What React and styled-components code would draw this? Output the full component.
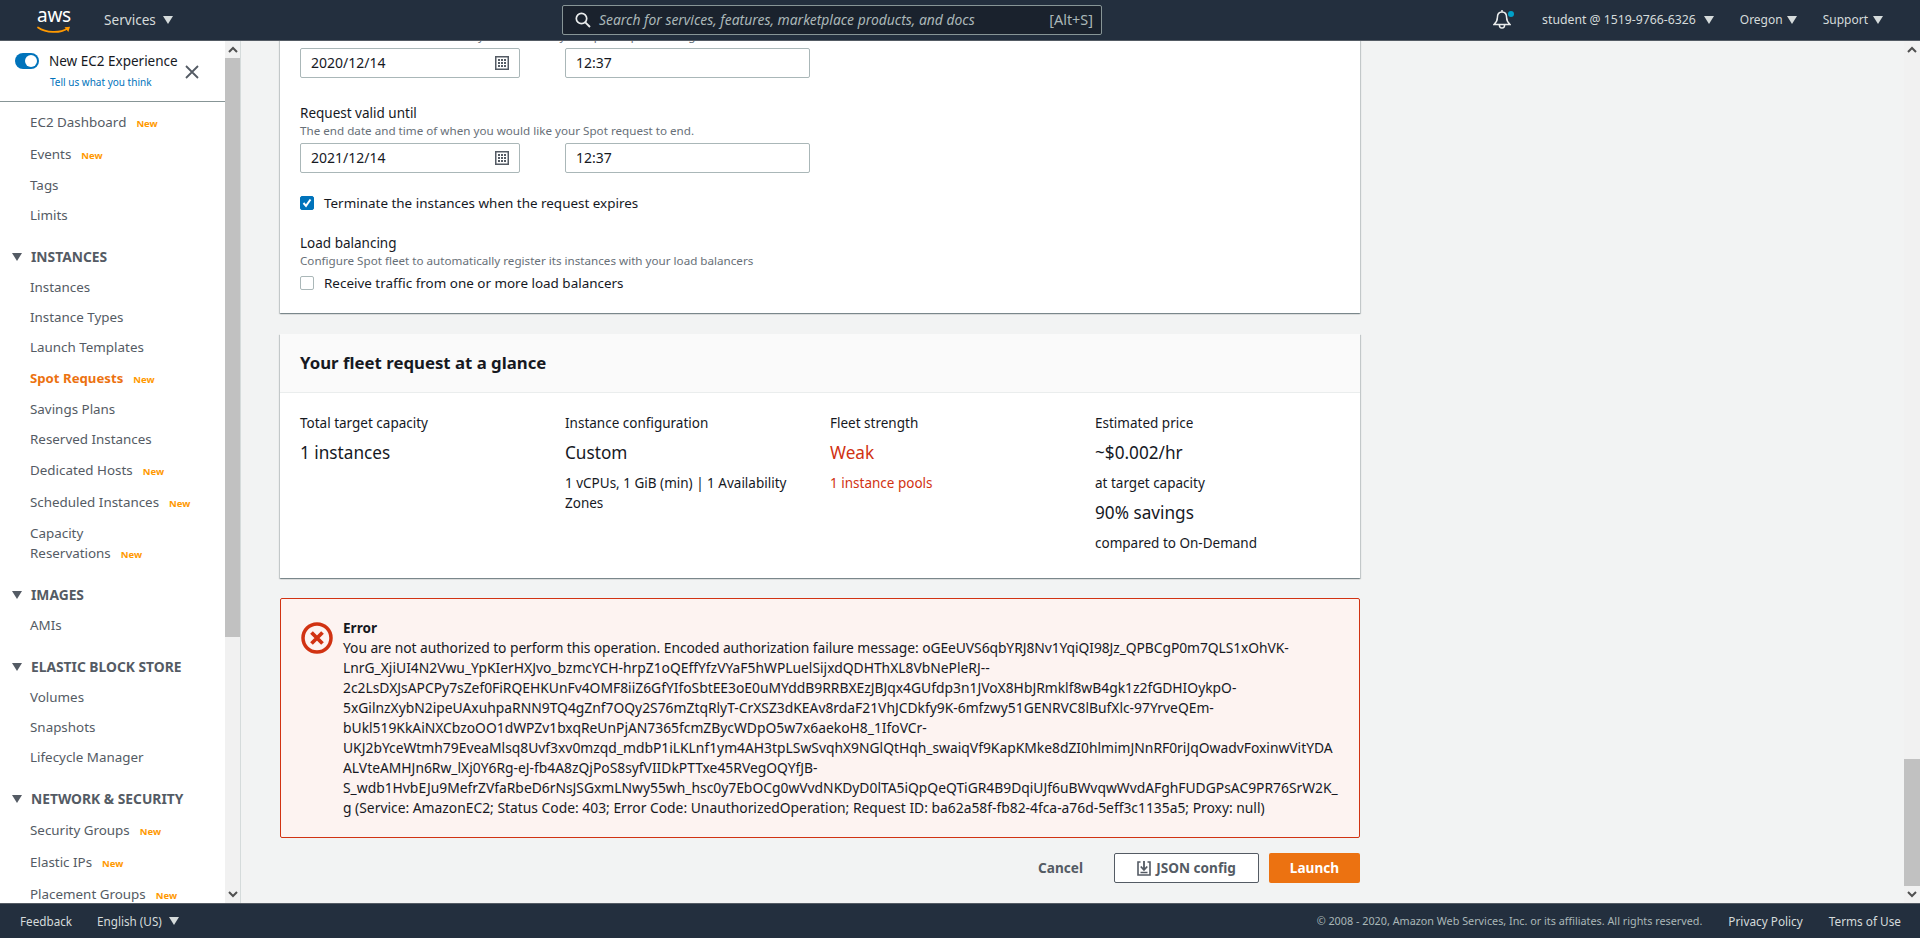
import React from "react";
import styled, { createGlobalStyle } from "styled-components";

const Global = createGlobalStyle`
  html, body { margin: 0; padding: 0; height: 100%; overflow: hidden; }
  body { font-family: "Noto Sans", "Liberation Sans", sans-serif; font-size: 14px; line-height: 20px; color: #16191f; }
  * { box-sizing: border-box; }
`;

const Page = styled.div`display: flex; flex-direction: column; height: 100vh; overflow: hidden;`;

const TopBar = styled.header`
  flex: none; height: 41px; background: #232f3e; border-bottom: 1px solid #545b64;
  display: flex; align-items: center; color: #d5dbdb; padding-right: 37px;
`;
const Logo = styled.div`position: relative; width: 34px; height: 30px; margin-left: 37px; flex: none;`;
const LogoWord = styled.span`
  display: block; font-size: 19px; line-height: 20px; color: #fff; letter-spacing: -.3px; text-align: center; margin-top: 0;
`;
const LogoSmile = styled.svg`position: absolute; left: 0; top: 21px;`;
const ServicesBtn = styled.div`margin-left: 33px; display: flex; align-items: center; gap: 7px; font-size: 13.6px; width: 70px; flex: none;`;
const Caret = styled.svg`flex: none; display: block;`;
const SearchBox = styled.div`
  margin-left: 388px; width: 540px; height: 30px; flex: none; display: flex; align-items: center;
  background: #1a222d; border: 1px solid #879596; border-radius: 2px; padding: 0 8px 0 12px; color: #aab7b8;
`;
const SearchText = styled.span`flex: 1; margin-left: 8px; font-style: italic; font-size: 13.9px;`;
const SearchKey = styled.span`font-size: 14.4px;`;
const NavRight = styled.div`margin-left: auto; display: flex; align-items: center; font-size: 12px;`;
const BellWrap = styled.div`position: relative; width: 18px; height: 22px; margin-right: 30px;`;
const BellDot = styled.span`position: absolute; left: 15px; top: 2px; width: 6px; height: 6px; border-radius: 50%; background: #00a1c9;`;
const NavItem = styled.div`display: flex; align-items: center; gap: ${p => p.$inner || 4}px; margin-left: ${p => p.$gap || 26}px; white-space: nowrap;`;
const AccountText = styled.span`font-size: 12.25px;`;

const Body = styled.div`flex: 1; min-height: 0; display: flex;`;

const Sidebar = styled.aside`flex: none; width: 241px; display: flex; background: #fff; border-right: 1px solid #d5dbdb;`;
const SideInner = styled.div`flex: 1; min-width: 0; overflow: hidden;`;
const Experience = styled.div`
  height: 61px; border-bottom: 1px solid #879596; display: flex; align-items: flex-start; padding: 12px 0 0 15px;
`;
const Toggle = styled.span`
  flex: none; width: 24px; height: 16px; border-radius: 8px; background: #0073bb; position: relative; margin-top: 0;
  &::after { content: ""; position: absolute; right: 2px; top: 2px; width: 12px; height: 12px; border-radius: 50%; background: #fff; }
`;
const ExpText = styled.div`margin-left: 10px; width: 133px;`;
const ExpTitle = styled.div`font-size: 13.5px; line-height: 16px; white-space: nowrap;`;
const ExpLink = styled.div`font-size: 10px; line-height: 14px; margin-top: 6px; margin-left: 1px; color: #0073bb; white-space: nowrap;`;
const CloseIcon = styled.svg`flex: none; margin: 11px 0 0 2px;`;
const Nav = styled.nav`padding-top: 4px;`;
const Item = styled.div`
  display: block; padding: ${p => (p.$badge ? 6 : 5)}px 10px ${p => (p.$badge ? 6 : 5)}px 30px;
  font-size: ${p => (p.$active ? 13.2 : 13.4)}px; color: ${p => (p.$active ? "#ec7211" : "#545b64")}; font-weight: ${p => (p.$active ? 700 : 400)};
`;
const NewBadge = styled.span`margin-left: 10px; font-size: 9.5px; line-height: 0; font-weight: 700; color: #ff9900;`;
const SectionHead = styled.div`
  display: flex; align-items: center; height: 31px; margin-top: 11px; padding-left: 12px;
  font-size: 13.8px; font-weight: 700; color: #545b64;
  svg { margin-right: 9px; }
`;

const ScrollBar = styled.div`flex: none; width: ${p => p.$w}px; background: #f1f1f1; display: flex; flex-direction: column;`;
const ScrollArrow = styled.div`flex: none; height: 17px; display: flex; align-items: center; justify-content: center;`;
const ScrollTrack = styled.div`flex: 1; min-height: 0; display: flex; flex-direction: column; justify-content: ${p => (p.$end ? "flex-end" : "flex-start")};`;
const ScrollThumb = styled.div`background: #c1c1c1; flex: none;`;

const Main = styled.main`flex: 1; min-width: 0; display: flex; background: #f2f3f3;`;
const Scroller = styled.div`
  flex: 1; min-width: 0; overflow: hidden; display: flex; flex-direction: column; justify-content: flex-end;
  padding: 0 0 20px 39px;
`;
const Card = styled.section`
  flex: none; width: 1080px; background: #fff;
  box-shadow: 0 1px 1px 0 rgba(0,28,36,.3), 1px 1px 1px 0 rgba(0,28,36,.15), -1px 1px 1px 0 rgba(0,28,36,.15);
`;
const FormCard = styled(Card)`padding: 0 20px 20px;`;
const FieldLabel = styled.div`font-size: 13.5px; line-height: 20px; margin-top: ${p => p.$mt || 0}px;`;
const Hint = styled.div`font-size: 11.65px; line-height: 16px; color: #687078; white-space: nowrap;`;
const InputRow = styled.div`display: flex; gap: 45px; margin-top: 4px;`;
const Input = styled.div`
  width: ${p => p.$w}px; height: 30px; border: 1px solid #aab7b8; border-radius: 2px; background: #fff;
  display: flex; align-items: center; justify-content: space-between; padding: 0 10px; font-size: 14px;
`;
const CheckRow = styled.div`display: flex; align-items: center; height: 20px; margin-top: ${p => p.$mt}px; font-size: 13.45px;`;
const CheckBox = styled.span`
  flex: none; width: 14px; height: 14px; margin-right: 10px; border-radius: 2px; display: flex; align-items: center; justify-content: center;
  background: ${p => (p.$on ? "#0073bb" : "#fff")}; border: 1px solid ${p => (p.$on ? "#0073bb" : "#aab7b8")};
`;

const GlanceCard = styled(Card)`margin-top: 21px;`;
const GlanceHead = styled.h2`
  margin: 0; height: 59px; background: #fafafa; border-bottom: 1px solid #eaeded; padding: 0 20px;
  display: flex; align-items: center; font-size: 16.8px; line-height: 20px; font-weight: 700; color: #16191f;
`;
const GlanceGrid = styled.div`display: grid; grid-template-columns: repeat(4, 265px); padding: 20px 0 25px 20px;`;
const Col = styled.div`display: flex; flex-direction: column;`;
const ColLabel = styled.div`font-size: 13.5px;`;
const Big = styled.div`font-size: 17.2px; line-height: 20px; margin-top: 10px; color: ${p => (p.$red ? "#d13212" : "#16191f")};`;
const Sub = styled.div`font-size: 13.5px; margin-top: 10px; width: 240px; color: ${p => (p.$red ? "#d13212" : "#16191f")};`;

const ErrorBox = styled.div`
  flex: none; width: 1080px; height: 240px; margin-top: 20px; background: #fdf3f1; border: 1px solid #d13212; border-radius: 2px;
  display: flex; padding: 19px 15px 0 20px;
`;
const ErrorIcon = styled.svg`flex: none; margin-top: 4px;`;
const ErrorBody = styled.div`margin-left: 10px; min-width: 0;`;
const ErrorTitle = styled.div`font-size: 13.6px; font-weight: 700;`;
const ErrorLine = styled.div`font-size: 13.85px; white-space: nowrap; &:nth-child(2) { letter-spacing: -.07px; }`;

const Actions = styled.div`flex: none; width: 1080px; margin-top: 15px; display: flex; justify-content: flex-end; align-items: center;`;
const CancelBtn = styled.span`font-weight: 700; color: #545b64; font-size: 13.6px; margin-right: 31px;`;
const JsonBtn = styled.span`
  width: 145px; height: 30px; display: flex; align-items: center; justify-content: center; gap: 5px; background: #fff;
  border: 1px solid #545b64; border-radius: 2px; font-weight: 700; color: #545b64; font-size: 13.6px; margin-right: 10px;
`;
const LaunchBtn = styled.span`
  width: 91px; height: 30px; display: flex; align-items: center; justify-content: center; background: #ec7211;
  border-radius: 2px; font-weight: 700; color: #fff; font-size: 13.6px;
`;

const Footer = styled.footer`
  flex: none; height: 35px; background: #232f3e; border-top: 1px solid #545b64; display: flex; align-items: center;
  padding: 0 19px 0 20px; color: #d5dbdb; font-size: 11.7px;
`;
const Lang = styled.div`display: flex; align-items: center; gap: 7px; margin-left: 25px;`;
const Copy = styled.span`margin-left: auto; font-size: 10.8px; color: #aab7b8;`;
const FootLink = styled.span`margin-left: 26px; font-size: 11.8px; &:first-of-type { margin-left: 30px; }`;

const Tri = ({ w = 10, h = 8, c = "#d5dbdb" }) => (
  <Caret width={w} height={h} viewBox="0 0 10 8"><path d="M0 0h10L5 8z" fill={c} /></Caret>
);
const Cal = () => (
  <svg width="14" height="14" viewBox="0 0 14 14">
    <rect x=".75" y=".75" width="12.5" height="12.5" fill="none" stroke="#545b64" strokeWidth="1.5" />
    <path d="M3 3h2v2H3zM6 3h2v2H6zM9 3h2v2H9zM3 6h2v2H3zM6 6h2v2H6zM9 6h2v2H9zM3 9h2v2H3zM6 9h2v2H6zM9 9h2v2H9z" fill="#545b64" />
  </svg>
);
const Chevron = ({ down }) => (
  <svg width="10" height="7" viewBox="0 0 10 7">
    <path d={down ? "M1 1l4 4 4-4" : "M1 6l4-4 4 4"} fill="none" stroke="#505050" strokeWidth="2" />
  </svg>
);

const Nw = () => <NewBadge>New</NewBadge>;
const Sec = ({ children }) => <SectionHead><Tri c="#545b64" />{children}</SectionHead>;

const lines = [
  "You are not authorized to perform this operation. Encoded authorization failure message: oGEeUVS6qbYRJ8Nv1YqiQI98Jz_QPBCgP0m7QLS1xOhVK-",
  "LnrG_XjiUI4N2Vwu_YpKIerHXJvo_bzmcYCH-hrpZ1oQEffYfzVYaF5hWPLuelSijxdQDHThXL8VbNePleRJ--",
  "2c2LsDXJsAPCPy7sZef0FiRQEHKUnFv4OMF8iiZ6GfYIfoSbtEE3oE0uMYddB9RRBXEzJBJqx4GUfdp3n1JVoX8HbJRmklf8wB4gk1z2fGDHIOykpO-",
  "5xGilnzXybN2ipeUAxuhpaRNN9TQ4gZnf7OQy2S76mZtqRlyT-CrXSZ3dKEAv8rdaF21VhJCDkfy9K-6mfzwy51GENRVC8lBufXlc-97YrveQEm-",
  "bUkl519KkAiNXCbzoOO1dWPZv1bxqReUnPjAN7365fcmZBycWDpO5w7x6aekoH8_1IfoVCr-",
  "UKJ2bYceWtmh79EveaMlsq8Uvf3xv0mzqd_mdbP1iLKLnf1ym4AH3tpLSwSvqhX9NGlQtHqh_swaiqVf9KapKMke8dZI0hlmimJNnRF0riJqOwadvFoxinwVitYDA",
  "ALVteAMHJn6Rw_lXj0Y6Rg-eJ-fb4A8zQjPoS8syfVIIDkPTTxe45RVegOQYfJB-",
  "S_wdb1HvbEJu9MefrZVfaRbeD6rNsJSGxmLNwy55wh_hsc0y7EbOCg0wVvdNKDyD0lTA5iQpQeQTiGR4B9DqiUJf6uBWvqwWvdAFghFUDGPsAC9PR76SrW2K_",
  "g (Service: AmazonEC2; Status Code: 403; Error Code: UnauthorizedOperation; Request ID: ba62a58f-fb82-4fca-a76d-5eff3c1135a5; Proxy: null)",
];

export default function App() {
  return (
    <Page>
      <Global />
      <TopBar>
        <Logo>
          <LogoWord>aws</LogoWord>
          <LogoSmile width="34" height="9" viewBox="0 0 34 9">
            <path d="M1 1.5C9 7 23 7.5 30.5 2.5" fill="none" stroke="#f90" strokeWidth="1.7" strokeLinecap="round" />
            <path d="M27.5 1.2L33 .8 31.4 6z" fill="#f90" />
          </LogoSmile>
        </Logo>
        <ServicesBtn>Services <Tri /></ServicesBtn>
        <SearchBox>
          <svg width="16" height="16" viewBox="0 0 16 16"><circle cx="6.5" cy="6.5" r="5.2" fill="none" stroke="#eaeded" strokeWidth="1.7" /><path d="M10.3 10.3L15 15" stroke="#eaeded" strokeWidth="1.9" /></svg>
          <SearchText>Search for services, features, marketplace products, and docs</SearchText>
          <SearchKey>[Alt+S]</SearchKey>
        </SearchBox>
        <NavRight>
          <BellWrap>
            <svg width="18" height="22" viewBox="0 0 18 22"><path d="M9 3c-3.2 0-4.6 2.6-4.6 5.5 0 3-1.3 5-3.4 7h16c-2.1-2-3.4-4-3.4-7C13.600 5.600 12.200 3 9 3zM9 1v2M6.300 15.500c0 2.200 1.200 3.500 2.700 3.500s2.700-1.300 2.700-3.500" fill="none" stroke="#eaeded" strokeWidth="1.500" /></svg>
            <BellDot />
          </BellWrap>
          <NavItem $gap={1} $inner={8}><AccountText>student @ 1519-9766-6326</AccountText> <Tri /></NavItem>
          <NavItem>Oregon <Tri /></NavItem>
          <NavItem $inner={5}>Support <Tri /></NavItem>
        </NavRight>
      </TopBar>
      <Body>
        <Sidebar>
          <SideInner>
            <Experience>
              <Toggle />
              <ExpText>
                <ExpTitle>New EC2 Experience</ExpTitle>
                <ExpLink>Tell us what you think</ExpLink>
              </ExpText>
              <CloseIcon width="16" height="16" viewBox="0 0 16 16"><path d="M2 2l12 12M14 2L2 14" stroke="#545b64" strokeWidth="1.800" /></CloseIcon>
            </Experience>
            <Nav>
              <Item $badge>EC2 Dashboard<Nw /></Item>
              <Item $badge>Events<Nw /></Item>
              <Item>Tags</Item>
              <Item>Limits</Item>
              <Sec>INSTANCES</Sec>
              <Item>Instances</Item>
              <Item>Instance Types</Item>
              <Item>Launch Templates</Item>
              <Item $badge $active>Spot Requests<Nw /></Item>
              <Item>Savings Plans</Item>
              <Item>Reserved Instances</Item>
              <Item $badge>Dedicated Hosts<Nw /></Item>
              <Item $badge>Scheduled Instances<Nw /></Item>
              <Item>Capacity<br />Reservations<Nw /></Item>
              <Sec>IMAGES</Sec>
              <Item>AMIs</Item>
              <Sec>ELASTIC BLOCK STORE</Sec>
              <Item>Volumes</Item>
              <Item>Snapshots</Item>
              <Item>Lifecycle Manager</Item>
              <Sec>NETWORK &amp; SECURITY</Sec>
              <Item $badge>Security Groups<Nw /></Item>
              <Item $badge>Elastic IPs<Nw /></Item>
              <Item $badge>Placement Groups<Nw /></Item>
            </Nav>
          </SideInner>
          <ScrollBar $w={15}>
            <ScrollArrow><Chevron /></ScrollArrow>
            <ScrollTrack><ScrollThumb style={{ height: 579 }} /></ScrollTrack>
            <ScrollArrow><Chevron down /></ScrollArrow>
          </ScrollBar>
        </Sidebar>
        <Main>
          <Scroller>
            <FormCard>
              <Hint>The start date and time of when you would like your Spot request to begin.</Hint>
              <InputRow>
                <Input $w={220}>2020/12/14 <Cal /></Input>
                <Input $w={245}>12:37</Input>
              </InputRow>
              <FieldLabel $mt={25}>Request valid until</FieldLabel>
              <Hint>The end date and time of when you would like your Spot request to end.</Hint>
              <InputRow>
                <Input $w={220}>2021/12/14 <Cal /></Input>
                <Input $w={245}>12:37</Input>
              </InputRow>
              <CheckRow $mt={20}>
                <CheckBox $on><svg width="10" height="10" viewBox="0 0 10 10"><path d="M1.500 5l2.500 2.800L8.500 1.500" fill="none" stroke="#fff" strokeWidth="2" /></svg></CheckBox>
                Terminate the instances when the request expires
              </CheckRow>
              <FieldLabel $mt={20}>Load balancing</FieldLabel>
              <Hint>Configure Spot fleet to automatically register its instances with your load balancers</Hint>
              <CheckRow $mt={4}><CheckBox />Receive traffic from one or more load balancers</CheckRow>
            </FormCard>
            <GlanceCard>
              <GlanceHead>Your fleet request at a glance</GlanceHead>
              <GlanceGrid>
                <Col>
                  <ColLabel>Total target capacity</ColLabel>
                  <Big>1 instances</Big>
                </Col>
                <Col>
                  <ColLabel>Instance configuration</ColLabel>
                  <Big>Custom</Big>
                  <Sub>1 vCPUs, 1 GiB (min) | 1 Availability Zones</Sub>
                </Col>
                <Col>
                  <ColLabel>Fleet strength</ColLabel>
                  <Big $red>Weak</Big>
                  <Sub $red>1 instance pools</Sub>
                </Col>
                <Col>
                  <ColLabel>Estimated price</ColLabel>
                  <Big>~$0.002/hr</Big>
                  <Sub>at target capacity</Sub>
                  <Big>90% savings</Big>
                  <Sub>compared to On-Demand</Sub>
                </Col>
              </GlanceGrid>
            </GlanceCard>
            <ErrorBox>
              <ErrorIcon width="32" height="32" viewBox="0 0 32 32">
                <circle cx="16" cy="16" r="14" fill="none" stroke="#d13212" strokeWidth="3.500" />
                <path d="M10.500 10.500l11 11M21.500 10.500l-11 11" stroke="#d13212" strokeWidth="3.800" />
              </ErrorIcon>
              <ErrorBody>
                <ErrorTitle>Error</ErrorTitle>
                {lines.map(l => <ErrorLine key={l}>{l}</ErrorLine>)}
              </ErrorBody>
            </ErrorBox>
            <Actions>
              <CancelBtn>Cancel</CancelBtn>
              <JsonBtn>
                <svg width="14" height="15" viewBox="0 0 14 15"><path d="M3.500 1H1v13h12V1h-2.500" fill="none" stroke="#545b64" strokeWidth="1.600" /><path d="M7 0v8M3.800 5.500L7 9l3.200-3.500" fill="none" stroke="#545b64" strokeWidth="1.800" /><path d="M3.500 11.500h7" stroke="#545b64" strokeWidth="1.500" /></svg>
                JSON config
              </JsonBtn>
              <LaunchBtn>Launch</LaunchBtn>
            </Actions>
          </Scroller>
          <ScrollBar $w={16}>
            <ScrollArrow><Chevron /></ScrollArrow>
            <ScrollTrack $end><ScrollThumb style={{ height: 127 }} /></ScrollTrack>
            <ScrollArrow><Chevron down /></ScrollArrow>
          </ScrollBar>
        </Main>
      </Body>
      <Footer>
        <span>Feedback</span>
        <Lang>English (US) <Tri /></Lang>
        <Copy>© 2008 - 2020, Amazon Web Services, Inc. or its affiliates. All rights reserved.</Copy>
        <FootLink>Privacy Policy</FootLink>
        <FootLink>Terms of Use</FootLink>
      </Footer>
    </Page>
  );
}
